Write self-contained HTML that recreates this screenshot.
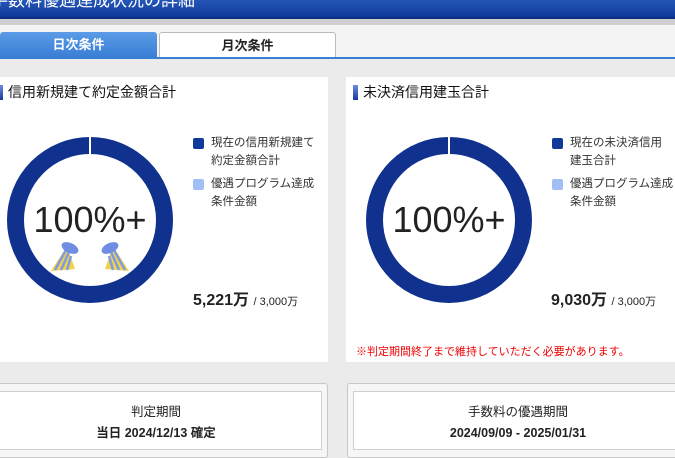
<!DOCTYPE html>
<html><head><meta charset="utf-8"><style>
*{margin:0;padding:0;box-sizing:border-box}
body{width:675px;height:458px;overflow:hidden;background:#ebebeb;font-family:"Liberation Sans","Noto Sans CJK JP",sans-serif;position:relative;color:#222}
.abs{position:absolute}
.hdr{left:0;top:0;width:675px;height:19px;background:linear-gradient(#2456b8,#0f3a9a);color:#fff;font-size:17px;line-height:10px;overflow:hidden;white-space:nowrap;border-bottom:2px solid #0a2f80}
.strip{left:0;top:19px;width:675px;height:6px;background:#cfcfcf}
.tabs{left:0;top:25px;width:675px;height:34px;background:#f4f4f4}
.t1{left:0;top:32px;width:157px;height:25px;background:linear-gradient(#5b9be6,#3a7fd6);color:#fff;font-weight:bold;font-size:13px;text-align:center;line-height:26px;border-radius:3px 3px 0 0}
.t2{left:159px;top:32px;width:177px;height:25px;background:#fff;border:1px solid #bbb;border-bottom:none;font-weight:bold;font-size:13px;text-align:center;line-height:25px;border-radius:3px 3px 0 0}
.line{left:0;top:57px;width:675px;height:2px;background:#3a7fd6}
.panel{top:77px;height:285px;background:#fff}
.ttl{font-size:14px;top:82px;color:#111}
.bar{width:5px;height:15px;top:85px;background:linear-gradient(#6b8de0,#1a3a9a)}
.ring{width:166px;height:166px;border-radius:50%;border:17px solid #11318f;top:137px}
.gap{width:2px;height:18px;background:#fff;top:137px}
.pct{font-size:36px;top:199px;width:166px;text-align:center;color:#222}
.sq{width:11px;height:11px;border-radius:2px}
.lg{font-size:11.5px;line-height:18px;color:#333}
.val{font-size:16px;font-weight:bold;top:286px}
.val small{font-size:11px;font-weight:normal}
.ob{top:383px;height:75px;background:#f6f6f6;border:1px solid #c8c8c8;border-radius:3px}
.ib{top:391px;height:59px;background:#fff;border:1px solid #d0d0d0;text-align:center;font-size:12.5px;padding-top:10px;line-height:21px}
</style></head><body>
<div class="abs hdr"><span style="position:relative;left:-9px;top:-4px;display:inline-block">手数料優遇達成状況の詳細</span></div>
<div class="abs strip"></div>
<div class="abs tabs"></div>
<div class="abs t1">日次条件</div>
<div class="abs t2">月次条件</div>
<div class="abs line"></div>

<div class="abs panel" style="left:-10px;width:338px"></div>
<div class="abs bar" style="left:-2px"></div>
<div class="abs ttl" style="left:8px">信用新規建て約定金額合計</div>
<div class="abs ring" style="left:7px"></div>
<div class="abs gap" style="left:89px"></div>
<div class="abs pct" style="left:7px">100%+</div>
<svg class="abs" style="left:45px;top:238px" width="90" height="36" viewBox="0 0 90 36">
<g><polygon points="6,33 30,31 22,8" fill="#f1d34a"/><path d="M10,32 L21,12 M16,32 L24,14 M22,32 L26,18" stroke="#7f9be6" stroke-width="2.5"/><ellipse cx="25" cy="10" rx="9" ry="5" transform="rotate(25 25 10)" fill="#6f8ee3"/></g>
<g><polygon points="84,33 60,31 68,8" fill="#f1d34a"/><path d="M80,32 L69,12 M74,32 L66,14 M68,32 L64,18" stroke="#7f9be6" stroke-width="2.5"/><ellipse cx="65" cy="10" rx="9" ry="5" transform="rotate(-25 65 10)" fill="#6f8ee3"/></g>
</svg>
<svg class="abs" style="left:404px;top:238px" width="90" height="36" viewBox="0 0 90 36">
<g><polygon points="6,33 30,31 22,8" fill="#f1d34a"/><path d="M10,32 L21,12 M16,32 L24,14 M22,32 L26,18" stroke="#7f9be6" stroke-width="2.5"/><ellipse cx="25" cy="10" rx="9" ry="5" transform="rotate(25 25 10)" fill="#6f8ee3"/></g>
<g><polygon points="84,33 60,31 68,8" fill="#f1d34a"/><path d="M80,32 L69,12 M74,32 L66,14 M68,32 L64,18" stroke="#7f9be6" stroke-width="2.5"/><ellipse cx="65" cy="10" rx="9" ry="5" transform="rotate(-25 65 10)" fill="#6f8ee3"/></g>
</svg>
<div class="abs sq" style="left:193px;top:138px;background:#0f3a9a"></div>
<div class="abs lg" style="left:211px;top:134px">現在の信用新規建て<br>約定金額合計</div>
<div class="abs sq" style="left:193px;top:179px;background:#a2bff5"></div>
<div class="abs lg" style="left:211px;top:175px">優遇プログラム達成<br>条件金額</div>
<div class="abs val" style="left:193px">5,221万 <small>/ 3,000万</small></div>

<div class="abs panel" style="left:346px;width:340px"></div>
<div class="abs bar" style="left:353px"></div>
<div class="abs ttl" style="left:363px">未決済信用建玉合計</div>
<div class="abs ring" style="left:366px"></div>
<div class="abs gap" style="left:448px"></div>
<div class="abs pct" style="left:366px">100%+</div>
<div class="abs sq" style="left:552px;top:138px;background:#0f3a9a"></div>
<div class="abs lg" style="left:570px;top:134px">現在の未決済信用<br>建玉合計</div>
<div class="abs sq" style="left:552px;top:179px;background:#a2bff5"></div>
<div class="abs lg" style="left:570px;top:175px">優遇プログラム達成<br>条件金額</div>
<div class="abs val" style="left:551px">9,030万 <small>/ 3,000万</small></div>
<div class="abs" style="left:356px;top:343px;font-size:11px;color:#e00">※判定期間終了まで維持していただく必要があります。</div>

<div class="abs ob" style="left:-10px;width:338px"></div>
<div class="abs ib" style="left:-10px;width:332px">判定期間<br><b>当日 2024/12/13 確定</b></div>
<div class="abs ob" style="left:347px;width:340px"></div>
<div class="abs ib" style="left:353px;width:330px">手数料の優遇期間<br><b>2024/09/09 - 2025/01/31</b></div>
</body></html>
